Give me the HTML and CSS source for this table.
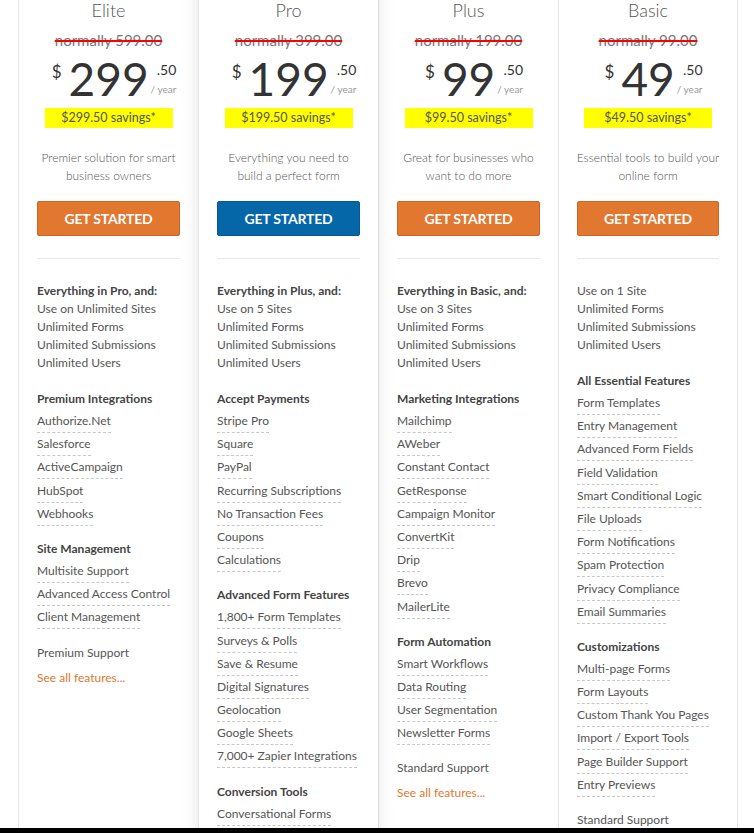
FILE: index.html
```html
<!DOCTYPE html>
<html lang="en">
<head>
<meta charset="utf-8">
<title>Pricing</title>
<link rel="stylesheet" href="styles.css">
</head>
<body>
<div class="page">
  <div class="viewport">
    <div class="plans">
      <!-- Elite -->
      <section class="plan">
        <h2 class="plan-name">Elite</h2>
        <div class="normally">normally 599.00</div>
        <div class="price"><span class="cur">$</span><span class="amt">299</span><span class="side"><span class="cents">.50</span><span class="per">/ year</span></span></div>
        <div class="savings">$299.50 savings*</div>
        <p class="desc">Premier solution for smart business owners</p>
        <a class="btn orange" href="#">GET STARTED</a>
        <hr class="divider">
        <div class="features">
          <div class="lines">
            <div class="head">Everything in Pro, and:</div>
            <div>Use on Unlimited Sites</div>
            <div>Unlimited Forms</div>
            <div>Unlimited Submissions</div>
            <div>Unlimited Users</div>
          </div>
          <div class="group">
            <div class="head">Premium Integrations</div>
            <ul>
              <li><span>Authorize.Net</span></li>
              <li><span>Salesforce</span></li>
              <li><span>ActiveCampaign</span></li>
              <li><span>HubSpot</span></li>
              <li><span>Webhooks</span></li>
            </ul>
          </div>
          <div class="group">
            <div class="head">Site Management</div>
            <ul>
              <li><span>Multisite Support</span></li>
              <li><span>Advanced Access Control</span></li>
              <li><span>Client Management</span></li>
            </ul>
          </div>
          <div class="support">Premium Support</div>
          <a class="see-all" href="#">See all features...</a>
        </div>
      </section>

      <!-- Pro -->
      <section class="plan featured">
        <h2 class="plan-name">Pro</h2>
        <div class="normally">normally 399.00</div>
        <div class="price"><span class="cur">$</span><span class="amt">199</span><span class="side"><span class="cents">.50</span><span class="per">/ year</span></span></div>
        <div class="savings">$199.50 savings*</div>
        <p class="desc">Everything you need to build a perfect form</p>
        <a class="btn blue" href="#">GET STARTED</a>
        <hr class="divider">
        <div class="features">
          <div class="lines">
            <div class="head">Everything in Plus, and:</div>
            <div>Use on 5 Sites</div>
            <div>Unlimited Forms</div>
            <div>Unlimited Submissions</div>
            <div>Unlimited Users</div>
          </div>
          <div class="group">
            <div class="head">Accept Payments</div>
            <ul>
              <li><span>Stripe Pro</span></li>
              <li><span>Square</span></li>
              <li><span>PayPal</span></li>
              <li><span>Recurring Subscriptions</span></li>
              <li><span>No Transaction Fees</span></li>
              <li><span>Coupons</span></li>
              <li><span>Calculations</span></li>
            </ul>
          </div>
          <div class="group">
            <div class="head">Advanced Form Features</div>
            <ul>
              <li><span>1,800+ Form Templates</span></li>
              <li><span>Surveys &amp; Polls</span></li>
              <li><span>Save &amp; Resume</span></li>
              <li><span>Digital Signatures</span></li>
              <li><span>Geolocation</span></li>
              <li><span>Google Sheets</span></li>
              <li><span>7,000+ Zapier Integrations</span></li>
            </ul>
          </div>
          <div class="group">
            <div class="head">Conversion Tools</div>
            <ul>
              <li><span>Conversational Forms</span></li>
            </ul>
          </div>
        </div>
      </section>

      <!-- Plus -->
      <section class="plan">
        <h2 class="plan-name">Plus</h2>
        <div class="normally">normally 199.00</div>
        <div class="price"><span class="cur">$</span><span class="amt">99</span><span class="side"><span class="cents">.50</span><span class="per">/ year</span></span></div>
        <div class="savings">$99.50 savings*</div>
        <p class="desc">Great for businesses who want to do more</p>
        <a class="btn orange" href="#">GET STARTED</a>
        <hr class="divider">
        <div class="features">
          <div class="lines">
            <div class="head">Everything in Basic, and:</div>
            <div>Use on 3 Sites</div>
            <div>Unlimited Forms</div>
            <div>Unlimited Submissions</div>
            <div>Unlimited Users</div>
          </div>
          <div class="group">
            <div class="head">Marketing Integrations</div>
            <ul>
              <li><span>Mailchimp</span></li>
              <li><span>AWeber</span></li>
              <li><span>Constant Contact</span></li>
              <li><span>GetResponse</span></li>
              <li><span>Campaign Monitor</span></li>
              <li><span>ConvertKit</span></li>
              <li><span>Drip</span></li>
              <li><span>Brevo</span></li>
              <li><span>MailerLite</span></li>
            </ul>
          </div>
          <div class="group">
            <div class="head">Form Automation</div>
            <ul>
              <li><span>Smart Workflows</span></li>
              <li><span>Data Routing</span></li>
              <li><span>User Segmentation</span></li>
              <li><span>Newsletter Forms</span></li>
            </ul>
          </div>
          <div class="support">Standard Support</div>
          <a class="see-all" href="#">See all features...</a>
        </div>
      </section>

      <!-- Basic -->
      <section class="plan last">
        <h2 class="plan-name">Basic</h2>
        <div class="normally">normally 99.00</div>
        <div class="price"><span class="cur">$</span><span class="amt">49</span><span class="side"><span class="cents">.50</span><span class="per">/ year</span></span></div>
        <div class="savings">$49.50 savings*</div>
        <p class="desc">Essential tools to build your online form</p>
        <a class="btn orange" href="#">GET STARTED</a>
        <hr class="divider">
        <div class="features">
          <div class="lines">
            <div>Use on 1 Site</div>
            <div>Unlimited Forms</div>
            <div>Unlimited Submissions</div>
            <div>Unlimited Users</div>
          </div>
          <div class="group">
            <div class="head">All Essential Features</div>
            <ul>
              <li><span>Form Templates</span></li>
              <li><span>Entry Management</span></li>
              <li><span>Advanced Form Fields</span></li>
              <li><span>Field Validation</span></li>
              <li><span>Smart Conditional Logic</span></li>
              <li><span>File Uploads</span></li>
              <li><span>Form Notifications</span></li>
              <li><span>Spam Protection</span></li>
              <li><span>Privacy Compliance</span></li>
              <li><span>Email Summaries</span></li>
            </ul>
          </div>
          <div class="group">
            <div class="head">Customizations</div>
            <ul>
              <li><span>Multi-page Forms</span></li>
              <li><span>Form Layouts</span></li>
              <li><span>Custom Thank You Pages</span></li>
              <li><span>Import / Export Tools</span></li>
              <li><span>Page Builder Support</span></li>
              <li><span>Entry Previews</span></li>
            </ul>
          </div>
          <div class="support">Standard Support</div>
        </div>
      </section>
    </div>
  </div>
  <div class="bottom-bar"></div>
</div>
</body>
</html>
```

FILE: styles.css
```css
* { box-sizing: border-box; }

html, body {
  margin: 0;
  padding: 0;
  background: #fff;
}

body {
  font-family: Lato, "Open Sans", "Liberation Sans", sans-serif;
  color: #555;
}

.page {
  height: 100vh;
  display: flex;
  flex-direction: column;
}

.viewport {
  flex: 1;
  overflow: hidden;
}

.bottom-bar {
  height: 5px;
  background: #000;
}

.plans {
  display: grid;
  grid-template-columns: repeat(4, 180px);
  padding-left: 18px;
  margin-top: -30px;
  align-items: stretch;
}

.plan {
  border-left: 1px solid #e6e6e6;
  padding: 28px 18px 40px 18px;
  display: flex;
  flex-direction: column;
  align-items: stretch;
  text-align: center;
  background: #fff;
  min-height: 900px;
}

.plan.last {
  border-right: 1px solid #e6e6e6;
}

.plan.featured {
  position: relative;
  z-index: 2;
  box-shadow: 0 0 16px rgba(0, 0, 0, 0.10);
}

.plan-name {
  margin: 0;
  font-size: 18px;
  line-height: 24px;
  font-weight: 300;
  color: #555;
}

.normally {
  margin-top: 8px;
  font-size: 15px;
  line-height: 20px;
  font-weight: 400;
  color: #777;
  text-decoration: line-through;
  text-decoration-color: #ff0000;
  text-decoration-thickness: 1.5px;
}

.price {
  margin-top: 6px;
  padding-left: 11px;
  display: flex;
  justify-content: center;
  align-items: flex-start;
  color: #333;
}

.cur {
  font-size: 17px;
  line-height: 20px;
  margin-top: 6px;
  margin-right: 7px;
}

.amt {
  font-size: 46px;
  line-height: 46px;
  font-weight: 400;
}

.side {
  display: flex;
  flex-direction: column;
  align-items: flex-end;
  margin-left: 2px;
}

.cents {
  font-size: 14px;
  line-height: 16px;
  margin-top: 6px;
}

.per {
  font-size: 10px;
  line-height: 12px;
  margin-top: 5px;
  color: #999;
}

.savings {
  align-self: center;
  width: 128px;
  margin-top: 6px;
  background: #ffff00;
  font-size: 12.5px;
  line-height: 20px;
  color: #555;
}

.desc {
  margin: 21px -1.5px 0 -1.5px;
  font-size: 12px;
  line-height: 18px;
  font-weight: 300;
  color: #555;
}

.btn {
  display: block;
  margin-top: 16px;
  height: 35px;
  line-height: 33px;
  border-radius: 2px;
  font-size: 14px;
  font-weight: 700;
  color: #fff;
  text-decoration: none;
  letter-spacing: -0.2px;
}

.btn.orange {
  background: #e27730;
  border: 1px solid #cd6622;
}

.btn.blue {
  background: #0567a8;
  border: 1px solid #035a93;
}

.divider {
  margin: 22px 0 0 0;
  border: 0;
  border-top: 1px solid #e8e8e8;
  height: 0;
}

.features {
  margin-top: 23px;
  text-align: left;
  font-size: 12px;
  line-height: 18px;
  color: #555;
}

.head {
  font-weight: 700;
  color: #444;
}

.group {
  margin-top: 18px;
}

.group .head {
  margin-bottom: 2px;
}

.group + .group,
.group + .support {
  margin-top: 14px;
}

ul {
  list-style: none;
  margin: 0;
  padding: 0;
}

li {
  padding-top: 2px;
  height: 23.2px;
}

li span {
  display: inline-block;
  padding-bottom: 2px;
  border-bottom: 1px dashed #c8c8c8;
}

.see-all {
  display: block;
  margin-top: 7px;
  color: #e27730;
  text-decoration: none;
}
```
